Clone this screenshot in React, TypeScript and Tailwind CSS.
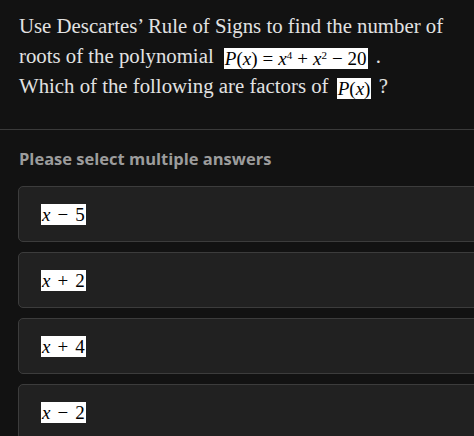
const MathBox = ({ children, className = "" }: { children: React.ReactNode; className?: string }) => (
    <span
        className={`inline-block bg-white text-black px-[1px] leading-[21px] h-[21px] align-middle font-['Liberation_Serif',serif] text-[19px] whitespace-nowrap ${className}`}
    >
        {children}
    </span>
);

const X = () => <i>x</i>;
const Op = ({ c, wide }: { c: string; wide?: boolean }) => (
    <span className={wide ? "mx-[7px]" : "mx-[5px]"}>{c}</span>
);

const options = [
    { op: "−", n: "5" },
    { op: "+", n: "2" },
    { op: "+", n: "4" },
    { op: "−", n: "2" },
];

const App = () => {
    return (
        <div className="w-[474px] h-[436px] overflow-hidden bg-[#121212]">
            <div className="px-[19px] pt-[11px] pb-[28px] font-['Liberation_Serif',serif] text-[20.8px] leading-[30px] text-[#e2e2e2]">
                <p>Use Descartes’ Rule of Signs to find the number of</p>
                <p>
                    roots of the polynomial{" "}
                    <MathBox className="ml-[5px] mr-[3px]">
                        <i>P</i>(<X />)<Op c="=" />
                        <X />
                        <sup className="text-[11px]">4</sup>
                        <Op c="+" />
                        <X />
                        <sup className="text-[11px]">2</sup>
                        <Op c="−" />
                        20
                    </MathBox>{" "}
                    .
                </p>
                <p>
                    Which of the following are factors of{" "}
                    <MathBox className="ml-[3px] mr-[2px]">
                        <i>P</i>(<X />)
                    </MathBox>{" "}
                    ?
                </p>
            </div>
            <div className="h-px bg-[#3a3a3a]" />
            <div className="pl-[18px] pt-[17px]">
                <h3 className="pl-px font-['Open_Sans',sans-serif] font-bold text-[16.5px] leading-[24px] text-[#9c9c9c] mb-[15px]">
                    Please select multiple answers
                </h3>
                <div className="flex flex-col gap-[10px]">
                    {options.map((o, i) => (
                        <div
                            key={i}
                            className="w-[480px] h-[56px] flex items-center pl-[22px] bg-[#212121] border border-[#3c3c3c] rounded-[5px]"
                        >
                            <MathBox>
                                <X />
                                <Op c={o.op} wide />
                                {o.n}
                            </MathBox>
                        </div>
                    ))}
                </div>
            </div>
        </div>
    );
};

export default App;
